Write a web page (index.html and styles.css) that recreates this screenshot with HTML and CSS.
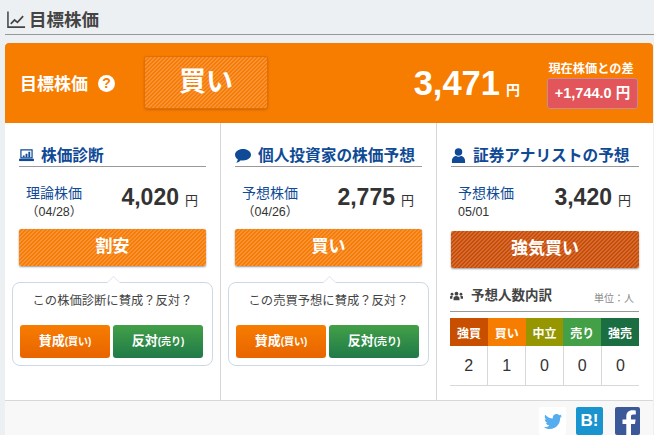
FILE: index.html
```html
<!DOCTYPE html>
<html lang="ja">
<head>
<meta charset="utf-8">
<title>目標株価</title>
<link rel="stylesheet" href="styles.css">
</head>
<body>
<main class="page">
  <h2 class="section-title">
    <svg class="chart-icon" viewBox="0 0 20 18" width="19" height="18"><path d="M1 0v16.500h18" fill="none" stroke="#444" stroke-width="1.600"/><path d="M4 13l4-4 3 2.500L17 5" fill="none" stroke="#444" stroke-width="1.800"/></svg>
    目標株価
  </h2>
  <section class="card">
    <div class="banner">
      <div class="banner-label">目標株価</div>
      <span class="help">?</span>
      <div class="verdict">買い</div>
      <div class="banner-price">3,471<span class="banner-yen">円</span></div>
      <div class="diff">
        <div class="diff-label">現在株価との差</div>
        <div class="diff-box">+1,744.0 円</div>
      </div>
    </div>
    <div class="columns">
      <div class="col">
        <h3 class="col-title">
          <svg class="col-icon" viewBox="0 0 16 14" width="15" height="13"><path d="M2 1h12v8.500H2z" fill="none" stroke="#0f4a96" stroke-width="1.300"/><path d="M4 9V7h2v2zM7 9V5h2v4zM10 9V3h2v6z" fill="#0f4a96"/><path d="M0 10.500h16V13H0z" fill="#0f4a96"/></svg>
          株価診断
        </h3>
        <div class="price-row">
          <div class="price-label">理論株価<span class="price-date">（04/28）</span></div>
          <div class="price">4,020<span class="yen">円</span></div>
        </div>
        <div class="rating">割安</div>
        <div class="vote">
          <p class="vote-q">この株価診断に賛成？反対？</p>
          <div class="vote-btns">
            <div class="btn-yes">賛成<small>(買い)</small></div>
            <div class="btn-no">反対<small>(売り)</small></div>
          </div>
        </div>
      </div>
      <div class="col">
        <h3 class="col-title">
          <svg class="col-icon" viewBox="0 0 16 14" width="16" height="14"><path d="M8 0c4.400 0 8 2.500 8 5.700s-3.600 5.700-8 5.700c-.8 0-1.500-.1-2.200-.2C4.600 12.600 2.800 13.600 1 13.800c.9-.9 1.600-2 1.800-3.600C1 9.200 0 7.500 0 5.700 0 2.500 3.600 0 8 0z" fill="#0f4a96"/></svg>
          個人投資家の株価予想
        </h3>
        <div class="price-row">
          <div class="price-label">予想株価<span class="price-date">（04/26）</span></div>
          <div class="price">2,775<span class="yen">円</span></div>
        </div>
        <div class="rating">買い</div>
        <div class="vote">
          <p class="vote-q">この売買予想に賛成？反対？</p>
          <div class="vote-btns">
            <div class="btn-yes">賛成<small>(買い)</small></div>
            <div class="btn-no">反対<small>(売り)</small></div>
          </div>
        </div>
      </div>
      <div class="col col-last">
        <h3 class="col-title">
          <svg class="col-icon" viewBox="0 0 16 16" width="15" height="15"><circle cx="8" cy="4.200" r="4" fill="#0f4a96"/><path d="M1 16v-2.500C1 10.500 3.500 8.500 5.500 8.500c.8.500 1.600.8 2.500.8s1.700-.3 2.500-.8c2 0 4.500 2 4.500 5V16z" fill="#0f4a96"/></svg>
          証券アナリストの予想
        </h3>
        <div class="price-row">
          <div class="price-label">予想株価<span class="price-date plain">05/01</span></div>
          <div class="price">3,420<span class="yen">円</span></div>
        </div>
        <div class="rating strong">強気買い</div>
        <div class="breakdown-head">
          <svg class="people" viewBox="0 0 14 10" width="13" height="10"><circle cx="7" cy="2.500" r="2" fill="#444"/><circle cx="2.200" cy="3" r="1.500" fill="#444"/><circle cx="11.800" cy="3" r="1.500" fill="#444"/><path d="M3.800 9.500V7.500C3.800 6 5 5 7 5s3.200 1 3.200 2.500v2zM0 8V6c0-.7.800-1.300 2.200-1.300l.8.200c-.4.600-.5 1.300-.5 3.100zM14 8V6c0-.7-.8-1.300-2.200-1.300l-.8.200c.4.600.5 1.300.5 3.100z" fill="#444"/></svg>
          <span class="breakdown-title">予想人数内訳</span>
          <span class="unit">単位：人</span>
        </div>
        <table class="breakdown">
          <tr>
            <th class="c1">強買</th><th class="c2">買い</th><th class="c3">中立</th><th class="c4">売り</th><th class="c5">強売</th>
          </tr>
          <tr><td>2</td><td>1</td><td>0</td><td>0</td><td>0</td></tr>
        </table>
      </div>
    </div>
    <footer class="share">
      <span class="sns tw"><svg viewBox="0 0 24 20" width="18" height="15"><path d="M24 2.400c-.9.400-1.800.7-2.800.8 1-.6 1.800-1.600 2.200-2.700-1 .6-2 1-3.100 1.200C19.300.7 18 0 16.600 0c-2.700 0-4.900 2.200-4.900 4.900 0 .4 0 .8.100 1.100C7.700 5.800 4.100 3.900 1.700.9 1.200 1.600 1 2.500 1 3.400c0 1.700.9 3.200 2.200 4.100-.8 0-1.600-.2-2.200-.6v.1c0 2.400 1.700 4.400 3.900 4.800-.4.100-.8.200-1.300.2-.3 0-.6 0-.9-.1.600 2 2.400 3.400 4.600 3.400-1.700 1.300-3.800 2.100-6.100 2.100-.4 0-.8 0-1.200-.1C2.200 19.200 4.800 20 7.500 20c9.100 0 14-7.500 14-14v-.6c1-.7 1.800-1.600 2.500-3z" fill="#55acee"/></svg></span>
      <span class="sns hb">B!</span>
      <span class="sns fb"><svg viewBox="0 0 25 28" width="25" height="28"><path d="M16 28V17h4l.6-4.500H16V9.700c0-1.300.4-2.200 2.300-2.200h2.500V3.500C20.400 3.400 19 3.300 17.300 3.300c-3.500 0-6 2.200-6 6.100v3.100H7.500V17h3.800v11z" fill="#fff"/></svg></span>
    </footer>
  </section>
</main>
</body>
</html>
```
FILE: styles.css
```css
* { box-sizing: border-box; }
html, body { margin: 0; padding: 0; }
body {
  width: 654px;
  height: 435px;
  overflow: hidden;
  background: #ecf0f3;
  font-family: "Liberation Sans", "Noto Sans CJK JP", sans-serif;
  color: #333;
}
.page { padding: 0 0 0 5px; }
.section-title {
  margin: 0;
  height: 35px;
  padding: 9px 0 0 2px;
  display: flex;
  align-items: flex-start;
  gap: 3px;
  font-size: 17.500px;
  line-height: 22px;
  font-weight: 700;
  color: #444;
  border-bottom: 1px solid #999;
}
.chart-icon { margin-top: 2px; }
.card {
  margin: 8px 1px 0 0;
  background: #fff;
}
.banner {
  height: 80px;
  background: #f77d00;
  border-radius: 4px 4px 0 0;
  display: flex;
  align-items: center;
  padding: 0 15px;
  color: #fff;
  position: relative;
}
.banner-label { font-size: 17px; font-weight: 700; width: 78px; margin-top: -2px; }
.help {
  width: 17px;
  height: 17px;
  border-radius: 50%;
  background: #fff;
  color: #f77d00;
  font-size: 14px;
  font-weight: 700;
  line-height: 17px;
  text-align: center;
}
.verdict {
  margin-left: 30px;
  margin-top: -1px;
  width: 122px;
  height: 51px;
  border-radius: 2px;
  background: repeating-linear-gradient(-45deg, #f77d00 0 1.414px, #f8923a 1.414px 2.828px);
  box-shadow: 0 0 0 1px #e06f0a, 0 1px 3px rgba(120, 60, 0, .7);
  font-size: 27px;
  font-weight: 700;
  line-height: 51px;
  text-align: center;
}
.banner-price {
  margin-left: auto;
  font-size: 34.500px;
  font-weight: 700;
  line-height: 40px;
  margin-top: 6px;
}
.banner-yen { font-size: 14px; margin-left: 6px; }
.diff { margin-left: 27px; margin-top: 4px; width: 91px; text-align: center; }
.diff-label { font-size: 12.200px; font-weight: 700; line-height: 16px; margin: 0 3px 1px 0; white-space: nowrap; }
.diff-box {
  height: 31px;
  background: #e2555a;
  border: 1px solid #cc8a8e;
  border-radius: 3px;
  font-size: 14.500px;
  font-weight: 700;
  line-height: 29px;
}
.columns {
  display: grid;
  grid-template-columns: 216px 216px 216px;
  height: 277px;
}
.col {
  padding: 20px 14px 0;
  border-right: 1px solid #d5d5d5;
  position: relative;
}
.col-last { border-right: 0; }
.col-title {
  margin: 0;
  height: 24px;
  padding-top: 2px;
  display: flex;
  align-items: center;
  gap: 7px;
  font-size: 15.700px;
  line-height: 20px;
  font-weight: 700;
  color: #0f4a96;
  border-bottom: 1px solid #999;
  white-space: nowrap;
}
.col-icon { flex: none; }
.price-row {
  height: 62px;
  display: flex;
  justify-content: space-between;
  align-items: flex-start;
  padding: 17px 8px 0 7px;
}
.price-label {
  display: block;
  font-size: 14px;
  line-height: 18px;
  color: #0f4a96;
  font-weight: 400;
}
.price-date {
  display: block;
  font-size: 12.500px;
  line-height: 18px;
  margin-top: 1px;
  color: #333;
  white-space: nowrap;
}
.price {
  font-size: 23px;
  font-weight: 700;
  line-height: 28px;
  margin-top: -1px;
  white-space: nowrap;
}
.yen { font-size: 13px; font-weight: 400; margin-left: 6px; }
.rating {
  height: 37px;
  border-radius: 2px;
  background: repeating-linear-gradient(-45deg, #f77d00 0 1.414px, #f7923a 1.414px 2.828px);
  box-shadow: 0 1px 2px rgba(0, 0, 0, .4);
  color: #fff;
  font-size: 17px;
  font-weight: 700;
  line-height: 35px;
  text-align: center;
}
.rating.strong {
  background: repeating-linear-gradient(-45deg, #c94f00 0 1.414px, #d4693a 1.414px 2.828px);
  margin-top: 2px;
}
.vote {
  position: relative;
  margin: 16px -7px 0;
  height: 84px;
  border: 1px solid #ccd8e6;
  border-radius: 8px;
  padding: 0 7px;
  text-align: center;
}
.vote::before {
  content: "";
  position: absolute;
  left: 50%;
  top: -6px;
  margin-left: -5px;
  width: 10px;
  height: 10px;
  background: #fff;
  border-left: 1px solid #e0e6ee;
  border-top: 1px solid #e0e6ee;
  transform: rotate(45deg) scale(.85);
}
.vote-q {
  margin: 0;
  font-size: 12.300px;
  line-height: 18px;
  padding-top: 9px;
  height: 42px;
  color: #444;
  white-space: nowrap;
}
.vote-btns { display: grid; grid-template-columns: 90px 90px; gap: 3px; }
.btn-yes, .btn-no {
  height: 33px;
  border-radius: 3px;
  color: #fff;
  font-size: 13px;
  font-weight: 700;
  line-height: 32px;
  text-align: center;
  white-space: nowrap;
}
.btn-yes small, .btn-no small { font-size: 10px; }
.btn-yes { background: linear-gradient(#f77d00, #e86400); }
.btn-no { background: linear-gradient(#43a047, #1f7a48); }
.breakdown-head {
  margin: 18px 0 0 -1px;
  height: 26px;
  display: flex;
  align-items: flex-start;
  gap: 8px;
  border-bottom: 1px solid #999;
}
.people { margin-top: 5px; }
.breakdown-title { font-size: 13.500px; font-weight: 700; line-height: 19px; color: #444; }
.unit { margin-left: auto; margin-right: 5px; margin-top: 3px; font-size: 10px; line-height: 20px; color: #888; white-space: nowrap; }
.breakdown {
  margin: 6px 0 0 -1px;
  width: 189px;
  border-collapse: collapse;
  table-layout: fixed;
}
.breakdown th {
  height: 28px;
  padding: 1px 0 0;
  color: #fff;
  font-size: 12px;
  font-weight: 700;
}
.c1 { background: #c94f00; }
.c2 { background: #f77d00; }
.c3 { background: #959600; }
.c4 { background: #43a047; }
.c5 { background: #1a6e41; }
.breakdown td {
  height: 39px;
  padding: 1px 0 0;
  text-align: center;
  font-size: 16px;
  border-right: 1px solid #d8d8d8;
  border-bottom: 1px solid #d8d8d8;
}
.breakdown td:last-child { border-right: 0; }
.share {
  height: 35px;
  background: #f8f8f8;
  border-top: 1px solid #d8d8d8;
  display: flex;
  justify-content: flex-end;
  padding: 6px 13px 0 0;
  gap: 10px;
  overflow: hidden;
}
.sns {
  width: 27px;
  height: 28px;
  flex: none;
  display: flex;
  align-items: center;
  justify-content: center;
  border-radius: 2px;
  font-weight: 700;
  color: #fff;
}
.tw { background: #fff; }
.hb { background: #1a94cf; font-size: 17px; }
.fb {
  width: 25px;
  margin-left: 2px;
  background: #3b5998;
}
```
